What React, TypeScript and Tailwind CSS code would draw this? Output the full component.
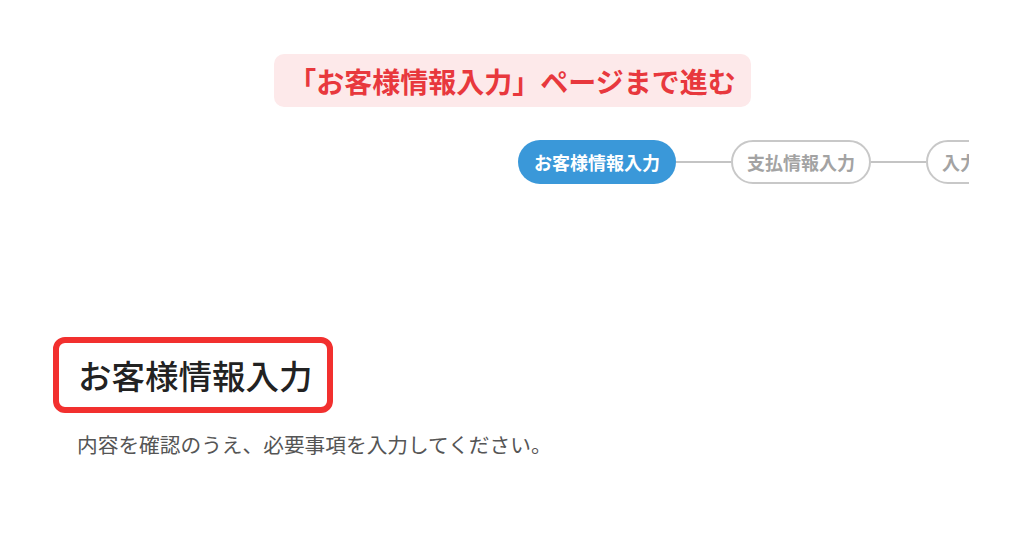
export default function App() {
  const font = { fontFamily: '"Noto Sans CJK JP", "Noto Sans", sans-serif' };
  return (
    <div className="w-[1024px] h-[538px] bg-white overflow-hidden" style={font}>
      <div className="flex justify-center pt-[54px]">
        <div className="h-[53px] w-[477px] rounded-[10px] bg-[#fde9ea] flex items-center justify-center">
          <span className="text-[28px] leading-none font-bold text-[#e8383d]">
            「お客様情報入力」ページまで進む
          </span>
        </div>
      </div>

      <div className="mt-[33px] w-[969px] overflow-hidden">
        <div className="flex items-center pl-[518px] whitespace-nowrap">
          <div className="h-[44px] px-[16px] rounded-full bg-[#3a98d9] flex items-center text-white font-bold text-[18px] shrink-0">
            お客様情報入力
          </div>
          <div className="w-[55px] h-[2px] bg-[#c4c4c4] shrink-0" />
          <div className="h-[44px] px-[14px] rounded-full border-2 border-[#c8c8c8] bg-white flex items-center text-[#a3a3a3] font-bold text-[18px] shrink-0">
            支払情報入力
          </div>
          <div className="w-[55px] h-[2px] bg-[#c4c4c4] shrink-0" />
          <div className="h-[44px] px-[14px] rounded-full border-2 border-[#c8c8c8] bg-white flex items-center text-[#a3a3a3] font-bold text-[18px] shrink-0">
            入力内容確認
          </div>
        </div>
      </div>

      <div className="pl-[53px] mt-[153px]">
        <div className="inline-flex h-[76px] w-[280px] items-center border-[6px] border-[#f2302f] rounded-[12px] pl-[19px]">
          <h1 className="text-[33.5px] leading-none font-medium text-[#222222]">お客様情報入力</h1>
        </div>
        <p className="mt-[21px] pl-[24px] text-[20.7px] leading-none text-[#555555]">
          内容を確認のうえ、必要事項を入力してください。
        </p>
      </div>
    </div>
  );
}
